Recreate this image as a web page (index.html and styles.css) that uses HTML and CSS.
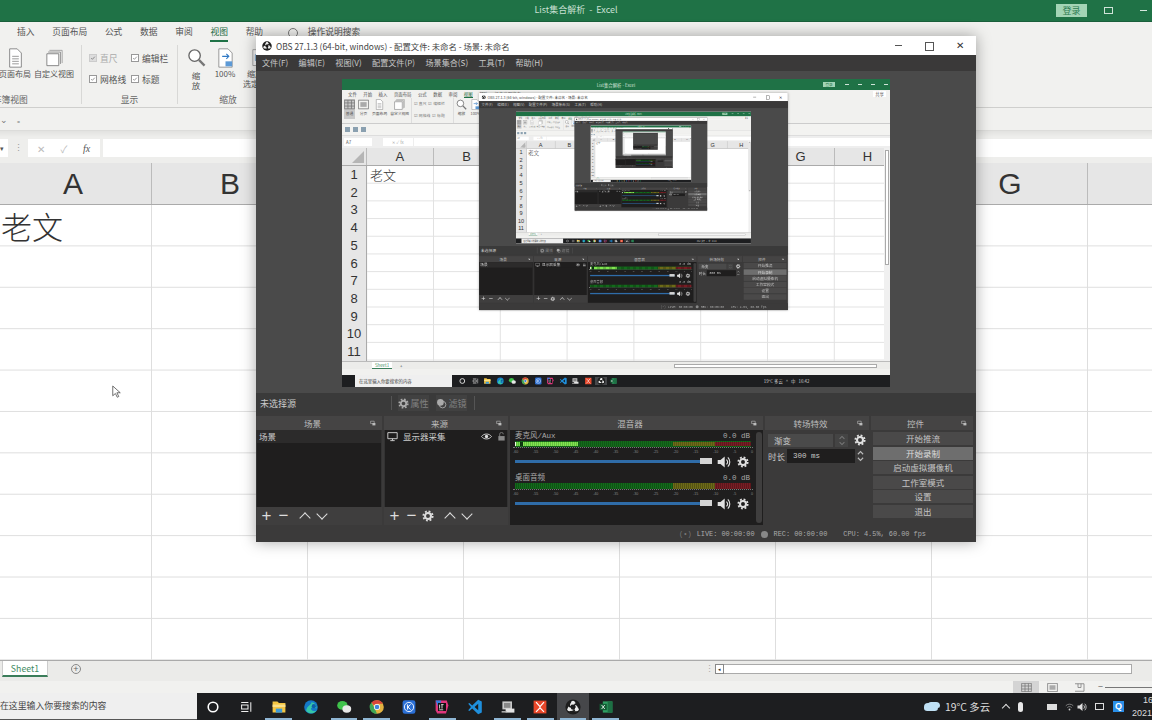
FILE: index.html
```html
<!DOCTYPE html>
<html lang="zh">
<head>
<meta charset="utf-8">
<title>List集合解析 - Excel</title>
<link rel="stylesheet" href="styles.css">
</head>
<body>
<svg class="sprite" aria-hidden="true">
  <symbol id="i-gear" viewBox="0 0 20 20"><circle cx="10" cy="10" r="5" fill="none" stroke="currentColor" stroke-width="3.4"/><circle cx="10" cy="10" r="7.8" fill="none" stroke="currentColor" stroke-width="3" stroke-dasharray="3.1 3.03"/></symbol>
  <symbol id="i-speaker" viewBox="0 0 20 20"><path d="M1 7h4l6-5v16l-6-5H1z" fill="currentColor"/><path d="M13.5 6.5a5 5 0 0 1 0 7M15.5 3.5a9 9 0 0 1 0 13" fill="none" stroke="currentColor" stroke-width="1.6"/></symbol>
  <symbol id="i-obs" viewBox="0 0 20 20"><circle cx="10" cy="10" r="9.5" fill="#1d1d1d"/><path d="M6.200 6.400A4.200 4.200 0 0 1 13.800 4.200 7.400 7.400 0 0 0 6.600 7.900 3.600 3.600 0 0 1 6.200 6.400z" fill="#ececec" transform="translate(0 1.200)"/><path d="M6.200 6.400A4.200 4.200 0 0 1 13.800 4.200 7.400 7.400 0 0 0 6.600 7.900 3.600 3.600 0 0 1 6.200 6.400z" fill="#ececec" transform="rotate(120 10 10) translate(0 1.200)"/><path d="M6.200 6.400A4.200 4.200 0 0 1 13.800 4.200 7.400 7.400 0 0 0 6.600 7.900 3.600 3.600 0 0 1 6.200 6.400z" fill="#ececec" transform="rotate(240 10 10) translate(0 1.200)"/><circle cx="10" cy="4.700" r="2.500" fill="#ececec"/><circle cx="5.400" cy="12.700" r="2.500" fill="#ececec"/><circle cx="14.600" cy="12.700" r="2.500" fill="#ececec"/><circle cx="10" cy="10" r="2.400" fill="#1d1d1d"/></symbol>
  <symbol id="i-dock" viewBox="0 0 10 10"><path d="M1 2h6v4H1z" fill="none" stroke="currentColor"/><path d="M4 5h5v4H4z" fill="currentColor"/></symbol>
  <symbol id="i-check" viewBox="0 0 10 10"><path d="M2 5.2l2 2 4-4.4" fill="none" stroke="#555" stroke-width="1"/></symbol>
  <symbol id="i-spin" viewBox="0 0 10 16"><path d="M2 6l3-3 3 3M2 10l3 3 3-3" fill="none" stroke="currentColor" stroke-width="1.300"/></symbol>
  <symbol id="i-wifi" viewBox="0 0 12 12"><path d="M1 5a7 7 0 0 1 10 0M3 7.500a4 4 0 0 1 6 0" fill="none" stroke="#999" stroke-width="1"/><circle cx="6" cy="10" r="1.200" fill="#ccc"/></symbol>
  <symbol id="i-cortana" viewBox="0 0 20 20"><circle cx="10" cy="10" r="6" fill="none" stroke="#fff" stroke-width="2"/></symbol>
  <symbol id="i-taskview" viewBox="0 0 20 20"><path d="M4 4.500h9M4 15.500h9M4.500 7.500h8v5h-8zM16 4v12" fill="none" stroke="#eee" stroke-width="1.300"/></symbol>
  <symbol id="i-folder" viewBox="0 0 20 20"><path d="M2 3h6l2 2h8v12H2z" fill="#f4c542"/><path d="M2 7h16v3H2z" fill="#fbe08a"/><path d="M6 12h8v5H6z" fill="#3f9bd8"/></symbol>
  <symbol id="i-edge" viewBox="0 0 20 20"><circle cx="10" cy="10" r="8.500" fill="#1478c8"/><path d="M4 15c4 5 11 3 13-1-3 2-7 1-7-2 0-2 4-2 7 0 0-4-2-8-7-8 3 2-6 4-6 11z" fill="#36c6a8"/><circle cx="13.500" cy="9" r="2.600" fill="#0d5ea8"/></symbol>
  <symbol id="i-wechat" viewBox="0 0 20 20"><ellipse cx="8" cy="8" rx="6.500" ry="5.500" fill="#3fc24b"/><ellipse cx="13.500" cy="12.500" rx="5.500" ry="4.600" fill="#e8e8e8"/></symbol>
  <symbol id="i-chrome" viewBox="0 0 20 20"><circle cx="10" cy="10" r="8.500" fill="#e3b341"/><path d="M10 1.500a8.500 8.500 0 0 1 7.400 4.300H10a4.200 4.200 0 0 0-3.700 2.200L3 4.300A8.500 8.500 0 0 1 10 1.500z" fill="#d8453a"/><path d="M3 4.300l4 7.200 3 6.900a8.500 8.500 0 0 1-7-14.100z" fill="#3ea655"/><circle cx="10" cy="10" r="3.800" fill="#fff"/><circle cx="10" cy="10" r="2.900" fill="#4285d8"/></symbol>
  <symbol id="i-idea" viewBox="0 0 20 20"><path d="M2 2h14l2 6-3 10H4L2 14z" fill="#e0357c"/><path d="M2 2h7l-3 10z" fill="#2f7fe0"/><path d="M5 5h10v10H5z" fill="#111"/><path d="M7 7v5M10 7v5M9 7h3M6.500 13.500h5" stroke="#fff" stroke-width="1" fill="none"/></symbol>
  <symbol id="i-vscode" viewBox="0 0 20 20"><path d="M14 1l4.500 2.200v13.600L14 19 6.500 12 3 15 1.500 14 5 10 1.500 6 3 5l3.500 3z" fill="#1f8fdc"/><path d="M14 6l-4.500 4 4.500 4z" fill="#1a1a1a"/></symbol>
  <symbol id="i-app" viewBox="0 0 20 20"><path d="M3 3h12v10H3z" fill="#c9c9c9"/><path d="M5 5h8v6H5z" fill="#888"/><path d="M7 12h11v5H7z" fill="#e3e3e3"/><path d="M2 15h6v2H2z" fill="#aaa"/></symbol>
  <symbol id="i-xapp" viewBox="0 0 20 20"><path d="M2 2h16v16H2z" fill="#e8472a"/><path d="M5 4l5 5.500L15 4M10 9.500V11M5 16l5-5 5 5" fill="none" stroke="#fff" stroke-width="1.500"/></symbol>
  <symbol id="i-excel" viewBox="0 0 20 20"><path d="M6 3h12v14H6z" fill="#2f9e62"/><path d="M12 3h6v14h-6z" fill="#1d7044"/><path d="M2 6h9v8H2z" fill="#125c34"/><path d="M4.500 7.500l4 5M8.500 7.500l-4 5" stroke="#fff" stroke-width="1"/></symbol>
  <symbol id="i-kapp" viewBox="0 0 20 20"><rect x="2" y="1.500" width="16" height="17" rx="3" fill="#2a6fd6"/><circle cx="10" cy="10" r="5.800" fill="none" stroke="#fff" stroke-width="1.100"/><path d="M8.200 6.800v6.400M12 6.800L8.600 10l3.400 3.200" fill="none" stroke="#fff" stroke-width="1.200"/></symbol>
  <symbol id="i-page" viewBox="0 0 20 24"><path d="M3 1h9l5 5v17H3z" fill="#fff" stroke="#777"/><path d="M6 10h8M6 13h8M6 16h8M6 19h8" stroke="#888"/></symbol>
  <symbol id="i-views" viewBox="0 0 20 20"><path d="M4 1h15v15" fill="none" stroke="#999"/><path d="M2.500 3h14.500v14" fill="none" stroke="#888"/><path d="M1 5h14v14H1z" fill="#fff" stroke="#777"/></symbol>
  <symbol id="i-mag" viewBox="0 0 20 20"><circle cx="8" cy="8" r="6" fill="#fff" stroke="#666" stroke-width="1.400"/><path d="M12.500 12.500l6 6" stroke="#777" stroke-width="2.400"/></symbol>
  <symbol id="i-zoom100" viewBox="0 0 20 24"><path d="M2 1h11l5 5v17H2z" fill="#fff" stroke="#888"/><path d="M6 10h8M11 7l3 3-3 3" fill="none" stroke="#2f78c4" stroke-width="1.300"/><path d="M10 16h8v6h-8z" fill="#5d9ad6"/></symbol>
  <symbol id="i-zoomsel" viewBox="0 0 20 24"><path d="M2 2h14v19H2z" fill="#f8f8f8" stroke="#999"/><path d="M5 8h8v7H5z" fill="#d9e8f5" stroke="#6a9cc8"/></symbol>
  <symbol id="i-normal" viewBox="0 0 14 12"><path d="M.5.500h13v11H.500zM.5 4h13M.5 8h13M5 .5v11M9.500.5v11" fill="none" stroke="#777"/></symbol>
  <symbol id="i-pgview" viewBox="0 0 14 12"><path d="M.5.500h13v11H.500z" fill="none" stroke="#777"/><path d="M3 3h8v6H3z" fill="#aaa"/></symbol>
  <symbol id="i-brk" viewBox="0 0 14 12"><path d="M1 1h12v10H1M5 1v5h4V1" fill="none" stroke="#777"/></symbol>
  <symbol id="i-monitor" viewBox="0 0 20 20"><path d="M1.500 3h17v11h-17zM6 17.500h8M10 14v3" fill="none" stroke="#ddd" stroke-width="1.600"/></symbol>
  <symbol id="i-eye" viewBox="0 0 20 20"><path d="M1 10c4-6 14-6 18 0-4 6-14 6-18 0z" fill="none" stroke="#ddd" stroke-width="1.600"/><circle cx="10" cy="10" r="3" fill="#ddd"/></symbol>
  <symbol id="i-lock" viewBox="0 0 20 20"><path d="M3 9h14v10H3z" fill="#888"/><path d="M6 9V5a4 4 0 0 1 8 0" fill="none" stroke="#888" stroke-width="1.800"/></symbol>
  <symbol id="i-filter" viewBox="0 0 20 20"><circle cx="8" cy="8" r="6" fill="currentColor"/><circle cx="12" cy="12" r="6" fill="none" stroke="currentColor" stroke-width="1.600"/></symbol>
</svg>

<div class="desk">
  <div class="xl">
    <header class="xl-title">
      <span class="xl-title-text">List集合解析 &nbsp;-&nbsp; Excel</span>
      <span class="xl-login">登录</span>
      <span class="xl-ctl xl-ctl-box"></span>
      <span class="xl-ctl xl-ctl-min"></span>
    </header>
    <nav class="xl-tabs">
      <span>插入</span><span>页面布局</span><span>公式</span><span>数据</span><span>审阅</span><span class="is-active">视图</span><span>帮助</span>
      <span class="xl-search">操作说明搜索</span>
    </nav>
    <section class="xl-ribbon">
      <div class="rb-group rb-views">
        <div class="rb-items">
          <div class="rb-big rb-w32"><svg class="ic-page"><use href="#i-page"/></svg><span>页面布局</span></div>
          <div class="rb-big rb-w40"><svg class="ic-page"><use href="#i-views"/></svg><span>自定义视图</span></div>
        </div>
        <div class="rb-label rb-label-clip">工作簿视图</div>
      </div>
      <div class="rb-group rb-show">
        <div class="rb-checks">
          <span class="cb is-off"><i class="box"><svg><use href="#i-check"/></svg></i>直尺</span>
          <span class="cb"><i class="box"><svg><use href="#i-check"/></svg></i>编辑栏</span>
          <span class="cb"><i class="box"><svg><use href="#i-check"/></svg></i>网格线</span>
          <span class="cb"><i class="box"><svg><use href="#i-check"/></svg></i>标题</span>
        </div>
        <div class="rb-label">显示</div>
      </div>
      <div class="rb-group rb-zoom">
        <div class="rb-items">
          <div class="rb-big rb-mag"><svg class="ic-mag"><use href="#i-mag"/></svg><span>缩<br>放</span></div>
          <div class="rb-big rb-100"><svg class="ic-page"><use href="#i-zoom100"/></svg><span>100%</span></div>
          <div class="rb-big rb-sel"><svg class="ic-page"><use href="#i-zoomsel"/></svg><span>缩放到<br>选定区域</span></div>
        </div>
        <div class="rb-label">缩放</div>
      </div>
    </section>
    <div class="xl-qat"><span>⌄</span><span>₌</span></div>
    <div class="xl-formula">
      <span class="fx-name">▾</span>
      <span class="fx-dots">⋮</span>
      <span class="fx-btns"><b>✕</b><b>✓</b><em>fx</em></span>
      <span class="fx-input"></span>
    </div>
    <div class="xl-cols">
      <span class="col-a">A</span><span>B</span><span>C</span><span>D</span><span>E</span><span>F</span><span>G</span>
    </div>
    <main class="xl-sheet"><div class="cell-a1">老文</div></main>
    <div class="xl-sheetbar">
      <span class="sheet-tab">Sheet1</span>
      <span class="sheet-add">+</span>
      <span class="sheet-dots">⋮</span>
      <span class="sheet-arrow">◂</span>
      <span class="sheet-scroll"></span>
    </div>
    <div class="xl-status">
      <span class="st-view is-on"><svg><use href="#i-normal"/></svg></span>
      <span class="st-view"><svg><use href="#i-pgview"/></svg></span>
      <span class="st-view"><svg><use href="#i-brk"/></svg></span>
      <span class="st-zoom">−</span><span class="st-line"></span>
    </div>
    <footer class="taskbar">
      <div class="tb-search">在这里输入你要搜索的内容</div>
      <div class="tb-apps">
        <span class="tb-app"><svg><use href="#i-cortana"/></svg></span>
        <span class="tb-app"><svg><use href="#i-taskview"/></svg></span>
        <span class="tb-app is-run"><svg><use href="#i-folder"/></svg></span>
        <span class="tb-app"><svg><use href="#i-edge"/></svg></span>
        <span class="tb-app is-run"><svg><use href="#i-wechat"/></svg></span>
        <span class="tb-app is-run"><svg><use href="#i-chrome"/></svg></span>
        <span class="tb-app"><svg><use href="#i-kapp"/></svg></span>
        <span class="tb-app is-run"><svg><use href="#i-idea"/></svg></span>
        <span class="tb-app"><svg><use href="#i-vscode"/></svg></span>
        <span class="tb-app is-run"><svg><use href="#i-app"/></svg></span>
        <span class="tb-app is-run"><svg><use href="#i-xapp"/></svg></span>
        <span class="tb-app is-run is-hl"><svg><use href="#i-obs"/></svg></span>
        <span class="tb-app is-run"><svg><use href="#i-excel"/></svg></span>
      </div>
      <div class="tb-tray">
        <span class="tray-cloud"></span>
        <span class="tray-weather">19°C 多云</span>
        <span class="tray-up"></span>
        <span class="tray-mic"></span>
        <span class="tray-batt"></span>
        <svg class="tray-wifi"><use href="#i-wifi"/></svg>
        <svg class="tray-sp"><use href="#i-speaker"/></svg>
        <span class="tray-ime"></span>
        <span class="tray-q">Q</span>
        <span class="tray-clock">16:42<br>2021/11/17</span>
      </div>
    </footer>
  </div>
  <svg class="cursor" viewBox="0 0 12 18"><path d="M1 1v13l3.500-3 2.500 5 2-1-2.500-5H11z" fill="#fff" stroke="#444"/></svg>
</div>

<template id="obs-tpl">
  <section class="obs">
    <div class="obs-title">
      <svg class="obs-logo"><use href="#i-obs"/></svg>
      <span class="obs-title-text">OBS 27.1.3 (64-bit, windows) - 配置文件: 未命名 - 场景: 未命名</span>
      <span class="win-btn win-min"></span><span class="win-btn win-max"></span><span class="win-btn win-close">✕</span>
    </div>
    <nav class="obs-menu"><span>文件(F)</span><span>编辑(E)</span><span>视图(V)</span><span>配置文件(P)</span><span>场景集合(S)</span><span>工具(T)</span><span>帮助(H)</span></nav>
    <div class="obs-preview"><div class="obs-screen"></div></div>
    <div class="obs-srcbar">
      <span class="src-name">未选择源</span>
      <span class="src-sep"></span>
      <span class="src-btn"><svg><use href="#i-gear"/></svg>属性</span>
      <span class="src-btn"><svg><use href="#i-filter"/></svg>滤镜</span>
      <span class="src-sep"></span>
    </div>
    <div class="obs-docks">
      <div class="dock">
        <h4 class="dock-head">场景<svg><use href="#i-dock"/></svg></h4>
        <div class="dock-list"><div class="list-row">场景</div></div>
        <div class="dock-tools"><span class="t-plus">+</span><span class="t-minus">−</span><span class="t-chev up"></span><span class="t-chev"></span></div>
      </div>
      <div class="dock">
        <h4 class="dock-head">来源<svg><use href="#i-dock"/></svg></h4>
        <div class="dock-list"><div class="list-row list-src"><svg class="s-mon"><use href="#i-monitor"/></svg><span class="s-name">显示器采集</span><svg class="s-eye"><use href="#i-eye"/></svg><svg class="s-lock"><use href="#i-lock"/></svg></div></div>
        <div class="dock-tools"><span class="t-plus">+</span><span class="t-minus">−</span><svg class="t-gear"><use href="#i-gear"/></svg><span class="t-chev up"></span><span class="t-chev"></span></div>
      </div>
      <div class="dock">
        <h4 class="dock-head">混音器<svg><use href="#i-dock"/></svg></h4>
        <div class="mixer">
          <div class="mix-chans">
            <div class="chan">
              <div class="chan-top"><span>麦克风/Aux</span><span>0.0 dB</span></div>
              <div class="meter is-live"></div>
              <div class="scale"><i>-60</i><i>-55</i><i>-50</i><i>-45</i><i>-40</i><i>-35</i><i>-30</i><i>-25</i><i>-20</i><i>-15</i><i>-10</i><i>-5</i><i>0</i></div>
              <div class="chan-ctl"><span class="slider"></span><svg class="c-sp"><use href="#i-speaker"/></svg><svg class="c-gear"><use href="#i-gear"/></svg></div>
            </div>
            <div class="chan">
              <div class="chan-top"><span>桌面音频</span><span>0.0 dB</span></div>
              <div class="meter"></div>
              <div class="scale"><i>-60</i><i>-55</i><i>-50</i><i>-45</i><i>-40</i><i>-35</i><i>-30</i><i>-25</i><i>-20</i><i>-15</i><i>-10</i><i>-5</i><i>0</i></div>
              <div class="chan-ctl"><span class="slider"></span><svg class="c-sp"><use href="#i-speaker"/></svg><svg class="c-gear"><use href="#i-gear"/></svg></div>
            </div>
          </div>
          <div class="mix-scroll"></div>
        </div>
      </div>
      <div class="dock">
        <h4 class="dock-head">转场特效<svg><use href="#i-dock"/></svg></h4>
        <div class="trans">
          <div class="trans-row"><span class="combo">渐变</span><span class="combo-spin"><svg><use href="#i-spin"/></svg></span><svg class="c-gear"><use href="#i-gear"/></svg></div>
          <div class="trans-row"><span class="trans-lbl">时长</span><span class="dur">300 ms</span><svg class="dur-spin"><use href="#i-spin"/></svg></div>
        </div>
      </div>
      <div class="dock">
        <h4 class="dock-head">控件<svg><use href="#i-dock"/></svg></h4>
        <div class="ctrls"><span>开始推流</span><span class="is-hover">开始录制</span><span>启动虚拟摄像机</span><span>工作室模式</span><span>设置</span><span>退出</span></div>
      </div>
    </div>
    <div class="obs-status"><span class="st-signal">(•)</span><span>LIVE: 00:00:00</span><i class="st-dot"></i><span>REC: 00:00:00</span><span class="st-cpu">CPU: 4.5%, 60.00 fps</span></div>
  </section>
</template>

<template id="mini-tpl">
  <div class="mini">
    <div class="m-title"><span class="m-title-text">List集合解析 - Excel</span><span class="m-login">登录</span><span class="m-ctl"><i></i><i></i><i></i><i></i></span></div>
    <div class="m-tabs"><span>文件</span><span>开始</span><span>插入</span><span>页面布局</span><span>公式</span><span>数据</span><span>审阅</span><span class="is-active">视图</span><span>帮助</span><span>操作说明搜索</span><span class="m-share">共享</span></div>
    <div class="m-ribbon">
      <div class="m-grp m-grp-a"><span class="m-big is-on"><svg><use href="#i-normal"/></svg>普通</span><span class="m-big"><svg><use href="#i-pgview"/></svg>分页</span><span class="m-big"><svg><use href="#i-page"/></svg>页面布局</span><span class="m-big"><svg><use href="#i-views"/></svg>自定义视图</span></div>
      <div class="m-grp m-grp-b"><span>☑ 直尺</span><span>☑ 编辑栏</span><span>☑ 网格线</span><span>☑ 标题</span></div>
      <div class="m-grp m-grp-c"><span class="m-big"><svg><use href="#i-mag"/></svg>缩放</span><span class="m-big"><svg><use href="#i-zoom100"/></svg>100%</span></div>
    </div>
    <div class="m-qat"><i></i><i></i><i></i></div>
    <div class="m-formula"><span class="m-name">A7</span><span class="m-fx">✕ ✓ fx</span><span class="m-input"></span></div>
    <div class="m-main">
      <div class="m-sheet">
        <div class="m-cols"><span class="m-corner"></span><span>A</span><span>B</span><span>C</span><span>D</span><span>E</span><span>F</span><span>G</span><span>H</span></div>
        <div class="m-body">
          <div class="m-rows"><span>1</span><span>2</span><span>3</span><span>4</span><span>5</span><span>6</span><span>7</span><span>8</span><span>9</span><span>10</span><span>11</span></div>
          <div class="m-cells"><span class="m-a1">老文</span></div>
        </div>
      </div>
      <div class="m-vbar"><i></i></div>
    </div>
    <div class="m-sheetbar"><span class="m-tab">Sheet1</span><span class="m-add">+</span><span class="m-hbar"></span></div>
    <div class="m-status"></div>
    <div class="m-task">
      <span class="m-start"></span>
      <span class="m-search">在这里输入你要搜索的内容</span>
      <span class="m-apps"><svg><use href="#i-cortana"/></svg><svg><use href="#i-taskview"/></svg><svg><use href="#i-folder"/></svg><svg><use href="#i-edge"/></svg><svg><use href="#i-wechat"/></svg><svg><use href="#i-chrome"/></svg><svg><use href="#i-kapp"/></svg><svg><use href="#i-idea"/></svg><svg><use href="#i-vscode"/></svg><svg><use href="#i-app"/></svg><svg><use href="#i-xapp"/></svg><svg class="is-hl"><use href="#i-obs"/></svg><svg><use href="#i-excel"/></svg></span>
      <span class="m-tray">19°C 多云 &nbsp; ^ &nbsp; 中 &nbsp; 16:42</span>
    </div>
    <div class="m-slot"></div>
  </div>
</template>
<script src="app.js"></script>
</body>
</html>
```

FILE: styles.css
```css
* { box-sizing: border-box; }
html, body { margin: 0; height: 100%; overflow: hidden; }
body { font-family: "Noto Sans CJK SC", "Noto Sans", sans-serif; background: #fff; }
i, em { font-style: normal; }
.sprite { position: absolute; width: 0; height: 0; }
.desk { position: relative; width: 1152px; height: 720px; overflow: hidden; }

/* Excel */
.xl { display: flex; flex-direction: column; width: 1152px; height: 720px; background: #fff; color: #444; font-size: 8.75px; }
.xl-title { position: relative; flex: 0 0 22px; display: flex; align-items: center; background: #1f7246; border-bottom: 1px solid #1a5f3b; padding-left: 1056px; }
.xl-title-text { position: absolute; left: 0; right: 0; text-align: center; color: #c9e0d3; font-size: 9px; top: 3px; }
.xl-login { position: relative; width: 31px; height: 13px; line-height: 13px; text-align: center; background: #a3d4b5; color: #2c7a50; font-size: 9px; }
.xl-ctl { display: block; }
.xl-ctl-box { margin-left: 17px; width: 9px; height: 7px; border: 1px solid #cfe3d8; }
.xl-ctl-min { margin-left: 27px; width: 7px; height: 1px; background: #d6e8de; }
.xl-tabs { flex: 0 0 20px; display: flex; align-items: center; gap: 17.7px; padding-left: 17px; background: #f1f1ef; color: #555; }
.xl-tabs span { position: relative; line-height: 20px; }
.xl-tabs .is-active { color: #1f6b44; }
.xl-tabs .is-active::after { content: ""; position: absolute; left: 0; right: 0; bottom: 0; height: 2px; background: #1f7246; }
.xl-search { margin-left: 27px; }
.xl-search::before { content: ""; position: absolute; left: -20px; top: 6px; width: 8px; height: 8px; border: 1px solid #777; border-radius: 50%; }
.xl-ribbon { flex: 0 0 66px; min-height: 0; overflow: hidden; display: flex; background: #f1f1ef; border-bottom: 1px solid #cfcfcd; }
.rb-group { display: flex; flex-direction: column; margin-top: 3px; border-right: 1px solid; border-image: linear-gradient(#d8d8d6 0 94%, transparent 94%) 1; overflow: hidden; }
.rb-views { width: 82px; }
.rb-show { width: 96px; }
.rb-zoom { width: 100px; border-right: 0; }
.rb-items { flex: 1; min-height: 0; display: flex; align-items: flex-start; padding-top: 3px; }
.rb-big { display: flex; flex-direction: column; align-items: center; text-align: center; line-height: 10px; font-size: 8px; color: #555; flex: none; white-space: nowrap; }
.rb-w32 { width: 32px; margin-left: -1px; }
.rb-w40 { width: 40px; margin-left: 3px; }
.ic-page { width: 17px; height: 20px; margin-bottom: 1px; display: block; flex: none; }
.ic-mag { width: 19px; height: 19px; margin: 0 0 3px; display: block; flex: none; }
.rb-mag { width: 16px; margin-left: 10px; font-size: 8.5px; }
.rb-100 { width: 28px; margin-left: 7px; }
.rb-sel { width: 34px; margin-left: 3px; }
.rb-label { flex: 0 0 14px; line-height: 14px; text-align: center; font-size: 8.75px; color: #666; }
.rb-label-clip { width: 44px; margin-left: -16px; white-space: nowrap; text-align: left; }
.rb-checks { flex: 1; min-height: 0; display: grid; grid-template-columns: 42px 50px; grid-auto-rows: 21px; padding: 2.5px 0 0 7px; align-content: start; }
.cb { display: flex; align-items: center; gap: 3px; color: #555; }
.cb.is-off { color: #aaa; }
.box { width: 8px; height: 8px; background: #fff; border: 1px solid #999; display: block; }
.box svg { width: 6px; height: 6px; display: block; }
.is-off .box { background: #ddd; border-color: #ccc; }
.xl-qat { flex: 0 0 23px; display: flex; align-items: center; gap: 9px; padding-left: 0; background: #f1f1ef; color: #777; font-size: 9px; border-bottom: 1px solid #dcdcda; }
.xl-formula { flex: 0 0 32px; display: flex; align-items: flex-start; padding-top: 8px; background: linear-gradient(#e2e2e0, #eeeeec 6px); }
.fx-name { width: 8px; height: 18px; background: #fff; line-height: 18px; font-size: 7px; color: #555; }
.fx-dots { width: 20px; text-align: center; line-height: 18px; color: #999; }
.fx-btns { width: 72px; height: 18px; background: #fff; display: flex; align-items: center; padding-left: 8px; gap: 13px; color: #bbb; font-size: 10px; }
.fx-btns b { font-weight: 400; width: 10px; text-align: center; }
.fx-btns em { color: #555; font: italic 10px "Liberation Serif", serif; margin-left: 1px; }
.fx-input { flex: 1; height: 18px; margin-left: 3px; background: #fff; }
.xl-cols { flex: 0 0 41px; display: flex; background: #e6e6e6; border-bottom: 1px solid #aaa; font: 30px/41px "Liberation Sans", sans-serif; color: #333; }
.xl-cols span { flex: 0 0 156px; text-align: center; border-right: 1px solid #bbb; padding-left: 1px; }
.xl-cols .col-a { flex-basis: 152px; padding: 0 5px 0 0; }
.xl-sheet { flex: 1; min-height: 0; background-color: #fff;
  background-image: linear-gradient(to right, #dedede 1px, transparent 1px), linear-gradient(to bottom, #dedede 1px, transparent 1px);
  background-size: 156px 100%, 100% 41.4px; background-position: 151px 0, 0 40.4px; }
.cell-a1 { padding: 1px 0 0 1px; font-size: 31px; line-height: 40px; font-weight: 300; color: #333; }
.xl-sheetbar { flex: 0 0 21px; display: flex; align-items: flex-start; background: #ebebe9; border-top: 1px solid #aaa; color: #777; }
.sheet-tab { margin-left: 2px; width: 46px; height: 16px; line-height: 15px; text-align: center; background: #fff; color: #3f8a63; font-size: 8.75px; border-bottom: 2px solid #3b7d5a; border-left: 1px solid #ccc; border-right: 1px solid #ccc; }
.sheet-add { margin: 3px 0 0 23px; width: 10px; height: 10px; border: 1px solid #888; border-radius: 50%; font: 9px/8px "Liberation Sans", sans-serif; text-align: center; color: #666; }
.sheet-dots { margin: 3px 0 0 622px; width: 12px; line-height: 10px; color: #aaa; text-align: center; }
.sheet-arrow { margin-top: 3px; width: 9px; height: 10px; background: #fff; border: 1px solid #888; font-size: 5px; line-height: 8px; text-align: center; color: #333; }
.sheet-scroll { margin-top: 3px; width: 408px; height: 10px; background: #fff; border: 1px solid #aaa; border-left: 0; }
.xl-status { flex: 0 0 12px; display: flex; align-items: stretch; padding-left: 1013px; background: #f1f1ef; color: #666; }
.st-view { width: 27px; display: flex; align-items: center; justify-content: center; }
.st-view.is-on { background: #d4d4d4; width: 26px; }
.st-view svg { width: 11px; height: 9px; display: block; }
.st-zoom { margin-left: 5px; line-height: 11px; font-size: 9px; }
.st-line { flex: 1; height: 1px; margin: 6px 0 0 2px; background: #777; }

/* Taskbar */
.taskbar { flex: 0 0 27px; display: flex; background: #1d1e20; }
.tb-search { flex: 0 0 197px; overflow: hidden; background: #efefef; color: #444; font-size: 8.9px; line-height: 26px; border-bottom: 1px solid #555; white-space: nowrap; }
.tb-apps { display: flex; flex: none; }
.tb-app { position: relative; width: 32.7px; display: flex; align-items: center; justify-content: center; }
.tb-app svg { width: 16px; height: 16px; display: block; }
.tb-app.is-hl { background: #46474a; }
.tb-app.is-run::after { content: ""; position: absolute; left: 3px; right: 3px; bottom: 0; height: 2px; background: #8fb6d4; }
.tb-tray { display: flex; align-items: center; flex: none; color: #dcdcdc; font-size: 10.4px; margin-left: 302px; white-space: nowrap; }
.tray-cloud { width: 14px; height: 8px; background: #bfe0f4; border-radius: 5px 6px 4px 4px; box-shadow: 3px -2px 0 -1px #bfe0f4; flex: none; }
.tray-weather { margin-left: 7px; }
.tray-up { width: 6px; height: 6px; margin: 3px 0 0 13px; border-left: 1px solid #ddd; border-top: 1px solid #ddd; transform: rotate(45deg); flex: none; }
.tray-mic { width: 5px; height: 10px; margin-left: 9px; border-radius: 3px; background: #e8e8e8; flex: none; }
.tray-batt { width: 10px; height: 6px; margin-left: 24px; background: #ddd; flex: none; }
.tray-wifi { width: 9px; height: 9px; margin-left: 8px; flex: none; }
.tray-sp { width: 10px; height: 10px; margin-left: 3px; color: #ddd; flex: none; }
.tray-ime { width: 9px; height: 7px; margin-left: 8px; border: 1px solid #ddd; flex: none; }
.tray-q { width: 11px; height: 11px; margin-left: 9px; background: #2a8fe8; color: #fff; font: 700 9px/11px "Liberation Sans", sans-serif; text-align: center; flex: none; }
.tray-clock { margin-left: 8px; font: 9px/13px "Liberation Sans", sans-serif; text-align: center; flex: none; }
.cursor { position: absolute; left: 112px; top: 385px; width: 9px; height: 14px; }

/* OBS */
.obs { position: absolute; left: 256px; top: 36px; width: 720px; height: 506px; display: flex; flex-direction: column; background: #3b3a3a; color: #c8c8c8; box-shadow: 0 0 14px rgba(0,0,0,.35); font-size: 9px; }
.obs .obs { left: 137px; top: 14px; transform: scale(.429); transform-origin: 0 0; box-shadow: 0 0 6px rgba(0,0,0,.3); }
.obs-title { flex: 0 0 19px; display: flex; align-items: center; background: #fff; color: #444; padding: 0 1px 0 6px; }
.obs-logo { width: 10px; height: 10px; margin-right: 4px; display: block; }
.obs-title-text { flex: 1; font-size: 8.4px; white-space: nowrap; }
.win-btn { position: relative; width: 30.5px; height: 19px; display: block; text-align: center; font: 10px/19px "Liberation Sans", sans-serif; color: #333; }
.win-min::after { content: ""; position: absolute; left: 11px; top: 9px; width: 7px; height: 1px; background: #555; }
.win-max::after { content: ""; position: absolute; left: 11px; top: 6px; width: 7px; height: 7px; border: 1px solid #555; }
.obs-menu { flex: 0 0 16px; display: flex; gap: 10.4px; padding-left: 6px; background: #3a3939; line-height: 16px; font-size: 8.1px; white-space: nowrap; }
.obs-preview { flex: 0 0 322px; padding: 8px 86px 6px; background: #4a4a4a; }
.obs-screen { position: relative; width: 548px; height: 308px; background: #4a4a4a; overflow: hidden; }
.desk > .obs > .obs-preview > .obs-screen { filter: blur(.4px); }
.obs-srcbar { flex: 0 0 20px; display: flex; align-items: center; padding-left: 4px; background: #3a3a3a; }
.src-name { width: 131px; color: #ccc; }
.src-sep { width: 1px; height: 14px; background: #555; }
.src-btn { display: flex; align-items: center; gap: 1px; width: 31px; height: 16px; margin-left: 6px; background: #414141; color: #808080; justify-content: center; }
.src-btn svg { width: 11px; height: 11px; color: #aaa; display: block; }
.src-btn + .src-btn { margin-left: 7px; }
.src-btn + .src-sep { margin-left: 7px; }
.obs-docks { flex: 0 0 113px; display: flex; gap: 2px; padding: 3px 3px 1px 0; }
.dock { display: flex; flex-direction: column; flex: 0 0 126px; }
.dock:nth-child(2) { flex-basis: 124px; }
.dock:nth-child(3) { flex-basis: 253px; }
.dock:nth-child(4) { flex-basis: 104px; }
.dock:nth-child(5) { flex-basis: 102px; }
.dock-head { position: relative; flex: 0 0 14px; margin: 0; padding-right: 13px; background: #454444; text-align: center; font-weight: 400; font-size: 8.5px; line-height: 14px; color: #bdbdbd; }
.dock-head svg { position: absolute; right: 6px; top: 4px; width: 6px; height: 6px; color: #bbb; }
.dock-list { flex: 1; background: #1f1e1e; border: 1px solid #333; border-width: 0 1px; font-size: 8.5px; }
.list-row { height: 13px; line-height: 13px; padding-left: 2px; background: #2c2b2b; color: #ccc; }
.list-src { display: flex; align-items: center; background: #1f1e1e; padding-left: 2px; }
.s-mon { width: 11px; height: 11px; display: block; }
.s-name { flex: 1; margin-left: 5px; }
.s-eye { width: 11px; height: 11px; display: block; }
.s-lock { width: 9px; height: 9px; margin: 0 1px 0 5px; display: block; }
.dock-tools { flex: 0 0 18px; display: flex; align-items: center; padding-left: 2px; background: #3f3e3e; color: #ddd; }
.t-plus, .t-minus { width: 17px; font: 300 17px/18px "Liberation Sans", sans-serif; text-align: center; }
.t-minus { margin-right: 4px; }
.t-gear { width: 12px; height: 12px; margin: 0 7px 0 -2px; display: block; }
.t-chev { width: 8px; height: 8px; margin: -4px 4px 0 5px; border: solid #ddd; border-width: 0 1.5px 1.5px 0; transform: rotate(45deg); }
.t-chev.up { margin-top: 4px; transform: rotate(-135deg); }
.mixer { flex: 1; display: flex; background: #1f1e1e; padding: 0 1px 0 4px; }
.mix-chans { flex: 1; display: flex; flex-direction: column; min-width: 0; }
.chan { height: 42px; }
.chan-top { display: flex; justify-content: space-between; padding: 1px 6px 0 1px; height: 11px; line-height: 10px; font-size: 7.5px; color: #aaa; font-family: "Liberation Mono", "Noto Sans CJK SC", monospace; }
.meter { width: 236px; margin-left: 1px; height: 6px; background:
  repeating-linear-gradient(to right, transparent 0 1px, rgba(0,0,0,.22) 1px 2px),
  linear-gradient(to right, #136a1b 0 158px, #6d6a18 158px 200px, #781d24 200px); }
.meter.is-live { background:
  repeating-linear-gradient(to right, transparent 0 1px, rgba(0,0,0,.18) 1px 2px),
  linear-gradient(to bottom, #136a1b 0 1px, transparent 1px 5px, #136a1b 5px),
  linear-gradient(to right, #eefbe6 0 1px, #6fe048 1px 5px, #0f3d12 5px 8px, #7fe64f 8px 63px, #136a1b 63px 158px, #6d6a18 158px 200px, #781d24 200px); }
.scale { display: flex; justify-content: space-between; width: 240px; margin-left: -1px; font-size: 3.6px; line-height: 6px; color: #888; font-family: "Liberation Sans", sans-serif; padding-top: 1px; height: 8px; border-top: 1px dotted #777; }
.chan-ctl { position: relative; display: flex; align-items: center; height: 13px; }
.slider { position: relative; display: block; width: 197px; height: 3px; margin-left: 1px; background: #2f6ca8; }
.slider::after { content: ""; position: absolute; right: 0; top: -2px; width: 12px; height: 6px; background: #d4d4d4; }
.c-sp { width: 14px; height: 14px; margin-left: 5px; color: #e0e0e0; display: block; }
.c-gear { width: 12px; height: 12px; margin-left: 6px; color: #e0e0e0; display: block; flex: none; }
.mix-scroll { width: 6px; margin: 2px 0 2px; background: #3f3e3e; border-radius: 3px; }
.trans { flex: 1; padding: 3px 0 0 3px; }
.trans-row { display: flex; align-items: center; height: 14px; margin-bottom: 2px; }
.combo { width: 65px; height: 13px; background: #4a4a4a; line-height: 13px; padding-left: 6px; font-size: 8.5px; }
.combo-spin { width: 13px; height: 13px; margin-left: 2px; background: #444; color: #777; display: flex; justify-content: center; }
.combo-spin svg { width: 8px; height: 13px; display: block; }
.trans-lbl { width: 19px; font-size: 8.5px; }
.dur { width: 68px; height: 14px; background: #1f1e1e; padding-left: 6px; font: 7.5px/14px "Liberation Mono", monospace; }
.dur-spin { width: 9px; height: 14px; margin-left: 1px; color: #bbb; display: block; }
.ctrls { flex: 1; display: flex; flex-direction: column; gap: 1.5px; padding: 2px 0 0 2px; }
.ctrls span { height: 13px; line-height: 13px; background: #4a4949; text-align: center; font-size: 8.5px; color: #c4c4c4; }
.ctrls .is-hover { background: #6e6e6e; color: #ddd; }
.obs-status { flex: 0 0 16px; display: flex; align-items: center; justify-content: flex-end; padding-right: 50px; font: 6.9px/16px "Liberation Mono", monospace; color: #aaa; background: #3b3a3a; white-space: nowrap; }
.st-signal { color: #777; margin-right: 5px; font-size: 7px; }
.st-dot { width: 7px; height: 7px; border-radius: 50%; background: #888; margin: 0 6px; }
.st-cpu { margin-left: 16px; }

/* Excel, as captured inside the OBS preview */
.mini { position: relative; width: 548px; height: 308px; display: flex; flex-direction: column; background: #fff; color: #555; font-size: 4.4px; overflow: hidden; }
.m-title { position: relative; flex: 0 0 11px; background: #1f7246; color: #cfe3d8; display: flex; align-items: center; justify-content: center; }
.m-title-text { font-size: 4.4px; }
.m-login { position: absolute; left: 481px; top: 3px; width: 12px; height: 5px; background: #a3d4b5; color: #2c7a50; font-size: 3.6px; line-height: 5px; text-align: center; }
.m-ctl { position: absolute; left: 503px; top: 5px; display: flex; gap: 9px; }
.m-ctl i { width: 4px; height: 1px; background: #cfe3d8; display: block; }
.m-tabs { flex: 0 0 8px; display: flex; align-items: center; gap: 6.5px; padding: 0 4px 0 6px; background: #f1f1ef; }
.m-tabs .is-active { color: #1f6b44; border-bottom: 1px solid #1f7246; }
.m-share { margin-left: auto; background: #fff; padding: 0 2px; }
.m-ribbon { flex: 0 0 26px; display: flex; background: #f1f1ef; border-bottom: 1px solid #ccc; overflow: hidden; }
.m-grp { display: flex; gap: 3px; padding: 1px 3px 4px 2px; border-right: 1px solid #ddd; font-size: 3.8px; }
.m-grp-a { width: 70px; }
.m-grp-b { width: 42px; flex-wrap: wrap; column-gap: 2px; align-content: flex-start; line-height: 9px; color: #777; }
.m-big { display: flex; flex-direction: column; align-items: center; white-space: nowrap; line-height: 5px; }
.m-big svg { width: 11px; height: 11px; display: block; margin-bottom: 1px; }
.m-big.is-on { background: #c8c8c8; }
.m-qat { flex: 0 0 12px; display: flex; align-items: center; gap: 3px; padding-left: 3px; background: #f3f3f1; border-bottom: 1px solid #ddd; }
.m-qat i { width: 5px; height: 5px; background: #8aa0b0; }
.m-formula { flex: 0 0 12px; display: flex; align-items: center; background: #eee; padding-left: 2px; }
.m-name { width: 28px; height: 8px; background: #fff; line-height: 8px; padding-left: 2px; }
.m-fx { width: 30px; height: 8px; margin-left: 11px; background: #fff; line-height: 8px; text-align: center; color: #aaa; }
.m-input { flex: 1; height: 8px; margin-left: 1px; background: #fff; }
.m-main { flex: 1; min-height: 0; display: flex; }
.m-sheet { flex: 1; display: flex; flex-direction: column; min-width: 0; }
.m-cols { flex: 0 0 17px; display: flex; background: #e6e6e6; border-bottom: 1px solid #aaa; font: 13px/17px "Liberation Sans", sans-serif; color: #333; }
.m-cols span { flex: 0 0 66.8px; text-align: center; border-right: 1px solid #bbb; }
.m-cols .m-corner { position: relative; flex-basis: 25px; overflow: hidden; }
.m-corner::after { content: ""; position: absolute; right: 2px; bottom: 2px; border: 6px solid transparent; border-right-color: #b5b5b5; border-bottom-color: #b5b5b5; }
.m-body { flex: 1; display: flex; min-height: 0; }
.m-rows { flex: 0 0 25px; display: flex; flex-direction: column; background: #e6e6e6; border-right: 1px solid #aaa; font: 13px/17.7px "Liberation Sans", sans-serif; color: #333; text-align: center; }
.m-rows span { flex: 0 0 17.7px; }
.m-cells { flex: 1; background-image: linear-gradient(to right, #e2e2e2 1px, transparent 1px), linear-gradient(to bottom, #e2e2e2 1px, transparent 1px); background-size: 66.8px 100%, 100% 17.7px; background-position: 66px 0, 0 16.7px; }
.m-a1 { display: block; font-size: 13px; line-height: 17px; padding-left: 3px; color: #333; font-weight: 300; }
.m-vbar { flex: 0 0 6px; background: #f0f0f0; padding: 2px 1px 96px; }
.m-vbar i { display: block; height: 100%; background: #fff; border: 1px solid #aaa; }
.m-sheetbar { flex: 0 0 8px; display: flex; align-items: center; background: #ececea; border-top: 1px solid #bbb; }
.m-tab { margin-left: 30px; width: 20px; text-align: center; background: #fff; border-bottom: 1px solid #3b7d5a; color: #3f8a63; line-height: 6px; }
.m-add { margin-left: 8px; line-height: 6px; }
.m-hbar { margin-left: 272px; width: 203px; height: 4px; background: #fff; border: 1px solid #aaa; }
.m-status { flex: 0 0 6px; background: #f1f1ef; }
.m-task { flex: 0 0 12px; display: flex; align-items: center; background: #1d1e20; color: #ccc; white-space: nowrap; }
.m-start { flex: 0 0 13px; }
.m-search { flex: 0 0 97px; align-self: stretch; background: #efefef; color: #444; line-height: 12px; padding-left: 4px; }
.m-apps { display: flex; align-items: center; margin-left: 4px; }
.m-apps svg { flex: 0 0 12.6px; width: 12.6px; height: 8px; display: block; }
.m-apps .is-hl { background: #46474a; }
.m-tray { margin-left: 144px; }
.m-slot { position: absolute; left: 0; top: 0; }
```

FILE: app.js
```js
// OBS previews the screen it is running on, so the window and its capture repeat inside each other.
const obsTpl = document.getElementById('obs-tpl');
const miniTpl = document.getElementById('mini-tpl');

// At the innermost levels the windows are too small for glyphs to show at all.
function blankText(root) {
  const walker = document.createTreeWalker(root, NodeFilter.SHOW_TEXT);
  while (walker.nextNode()) walker.currentNode.nodeValue = '';
}

function buildObs(depth) {
  const obs = obsTpl.content.cloneNode(true).firstElementChild;
  if (depth <= 1) blankText(obs);
  if (depth > 0) {
    const mini = miniTpl.content.cloneNode(true).firstElementChild;
    if (depth <= 1) blankText(mini);
    mini.querySelector('.m-slot').append(buildObs(depth - 1));
    obs.querySelector('.obs-screen').append(mini);
  }
  return obs;
}

document.querySelector('.desk').append(buildObs(4));
```
